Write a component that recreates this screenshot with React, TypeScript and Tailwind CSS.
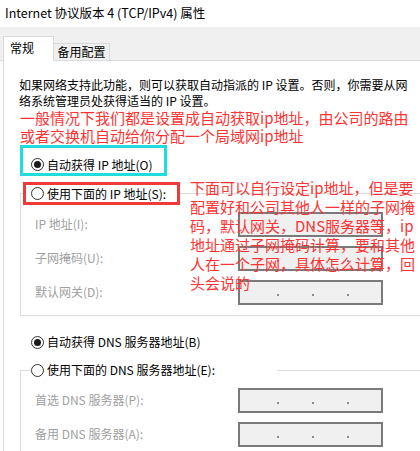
const Radio = ({ checked }: { checked?: boolean }) => (
  <span className="flex h-[13px] w-[13px] shrink-0 items-center justify-center rounded-full border border-[#333333] bg-white">
    {checked && <span className="h-[7px] w-[7px] rounded-full bg-[#1a1a1a]" />}
  </span>
);

const IpBox = () => (
  <div className="flex h-[25px] w-[145px] items-end gap-[33px] border-2 border-[#7a7a7a] bg-[#f0f0f0] pb-[7px] pl-[37px]">
    <span className="h-[2px] w-[2px] bg-[#8a8a9a]" />
    <span className="h-[2px] w-[2px] bg-[#8a8a9a]" />
    <span className="h-[2px] w-[2px] bg-[#8a8a9a]" />
  </div>
);

const FieldRow = ({ label }: { label: string }) => (
  <div className="flex h-[34px] items-center">
    <span className="w-[217px] pl-[14px] text-[#a0a0a0]">{label}</span>
    <IpBox />
  </div>
);

const note = [
  "下面可以自行设定ip地址，但是要",
  "配置好和公司其他人一样的子网掩",
  "码，默认网关，DNS服务器等，ip",
  "地址通过子网掩码计算，要和其他",
  "人在一个子网，具体怎么计算，回",
  "头会说的",
];

export default function App() {
  return (
    <div className="relative flex h-[451px] w-[420px] flex-col overflow-hidden bg-white text-[12px] text-black [font-family:'Noto_Sans_CJK_SC','Noto_Sans',sans-serif]">
      {/* title bar */}
      <div className="flex h-[27px] shrink-0 items-center pl-[5px] text-[12.5px]">Internet 协议版本 4 (TCP/IPv4) 属性</div>

      {/* tabs */}
      <div className="flex h-[34px] shrink-0 items-end border-b border-[#d9d9d9] bg-[#f0f0f0] pl-[3px]">
        <div className="-mb-px h-[25px] w-[51px] border border-b-0 border-[#d9d9d9] bg-white pl-[6px] pt-[2px] leading-[18px]">常规</div>
        <div className="flex h-[17px] w-[56px] items-center justify-center border border-b-0 border-l-0 border-[#d9d9d9] bg-[#f0f0f0]">
          备用配置
        </div>
      </div>

      {/* panel */}
      <div className="ml-[3px] flex flex-1 flex-col border-l border-[#d9d9d9]">
        <div className="ml-[15px] mt-[16px] leading-[16px] whitespace-nowrap">
          <div>如果网络支持此功能，则可以获取自动指派的 IP 设置。否则，你需要从网</div>
          <div>络系统管理员处获得适当的 IP 设置。</div>
        </div>
        <div className="ml-[16px] text-[15px] leading-[18px] text-[#ff3333] whitespace-nowrap">
          <div>一般情况下我们都是设置成自动获取ip地址，由公司的路由</div>
          <div>或者交换机自动给你分配一个局域网ip地址</div>
        </div>

        <div className="ml-[16px] flex h-[31px] w-[147px] items-center gap-[3px] border-[3px] border-[#20dcdc] pl-[8px] pt-[8px]">
          <Radio checked />
          <span>自动获得 IP 地址(O)</span>
        </div>

        {/* IP group */}
        <div className="ml-[16px] mt-[17px] h-[123px] border-b border-l border-t border-[#dcdcdc]">
          <div className="-mt-[12px] ml-[2px] flex h-[23px] w-[157px] items-center gap-[3px] border-[3px] border-[#f03a3a] bg-white pl-[5px]">
            <Radio />
            <span className="whitespace-nowrap">使用下面的 IP 地址(S):</span>
          </div>
          <div className="mt-[2px]">
            <FieldRow label="IP 地址(I):" />
            <FieldRow label="子网掩码(U):" />
            <FieldRow label="默认网关(D):" />
          </div>
        </div>

        <div className="mt-[16px] flex h-[20px] items-center gap-[3px] pl-[27px]">
          <Radio checked />
          <span>自动获得 DNS 服务器地址(B)</span>
        </div>

        {/* DNS group */}
        <div className="ml-[16px] mt-[18px] flex-1 border-l border-t border-[#dcdcdc]">
          <div className="-mt-[9px] ml-[10px] flex h-[16px] w-[246px] items-center gap-[3px] bg-white">
            <Radio />
            <span className="whitespace-nowrap">使用下面的 DNS 服务器地址(E):</span>
          </div>
          <div className="mt-[5px]">
            <FieldRow label="首选 DNS 服务器(P):" />
            <FieldRow label="备用 DNS 服务器(A):" />
          </div>
        </div>
      </div>

      {/* annotation */}
      <div className="absolute left-[190px] top-[178px] text-[15px] leading-[19px] text-[#ff3333] whitespace-nowrap">
        {note.map((line) => (
          <div key={line}>{line}</div>
        ))}
      </div>
    </div>
  );
}
